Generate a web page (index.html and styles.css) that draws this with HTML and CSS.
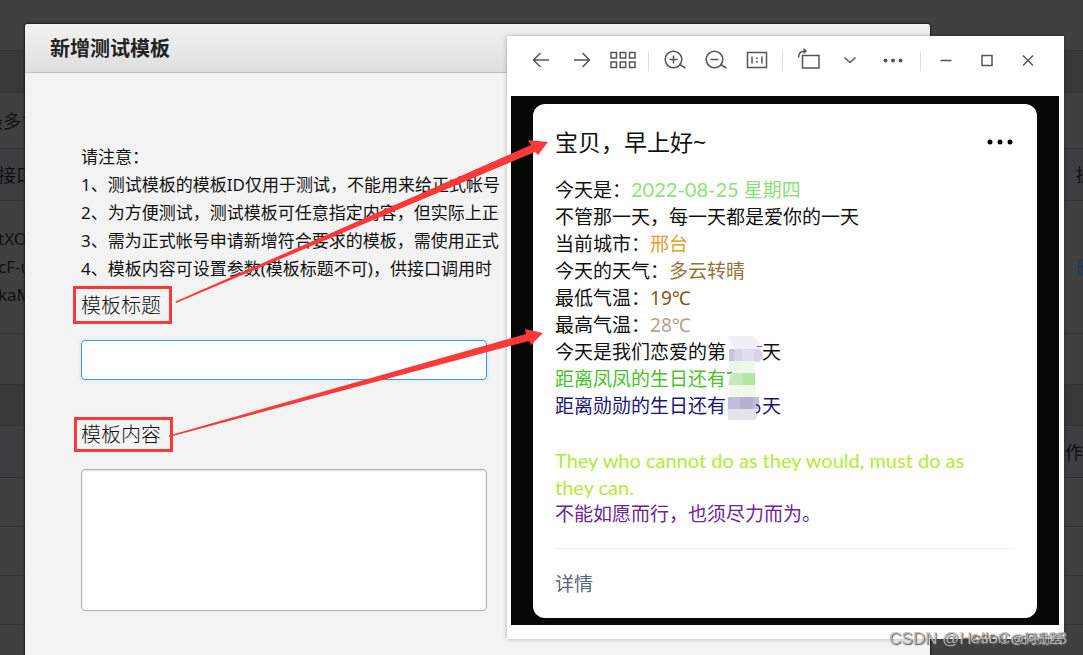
FILE: index.html
```html
<!DOCTYPE html>
<html lang="zh-CN">
<head>
<meta charset="utf-8">
<title>新增测试模板</title>
<link rel="stylesheet" href="styles.css">
</head>
<body>
<main class="page">
  <div class="row row-top"></div>
  <div class="row row-band row-42"></div>
  <div class="row row-56"><span class="edge edge-more">最多1</span></div>
  <div class="row row-head row-52"><span class="edge edge-api">接口</span><span class="edge-right">操作</span></div>
  <div class="row row-133"><span class="edge edge-code">tXO<br>cF-u<br>kaM</span><a class="edge-right remove" href="#">删除</a></div>
  <div class="row row-51"></div>
  <div class="row row-band row-41"></div>
  <div class="row row-head row-52"><span></span><span class="edge-right edge-op">操作</span></div>
  <div class="row row-49"></div>
  <div class="row row-49"></div>
  <div class="row row-49"></div>
</main>

<section class="dialog">
  <h1 class="dialog-title">新增测试模板</h1>
  <form class="dialog-body">
    <div class="notice">
      <p>请注意：</p>
      <p>1、测试模板的模板ID仅用于测试，不能用来给正式帐号</p>
      <p>2、为方便测试，测试模板可任意指定内容，但实际上正</p>
      <p>3、需为正式帐号申请新增符合要求的模板，需使用正式</p>
      <p>4、模板内容可设置参数(模板标题不可)，供接口调用时</p>
    </div>
    <label class="field-label" for="tpl-title">模板标题</label>
    <input class="field-input" id="tpl-title" type="text">
    <label class="field-label field-label-content" for="tpl-content">模板内容</label>
    <textarea class="field-area" id="tpl-content"></textarea>
  </form>
</section>

<section class="viewer">
  <header class="toolbar">
    <button class="tool" type="button" aria-label="上一张"><svg width="28" height="28" viewBox="0 0 28 28"><path d="M22 14H6.500M13.500 7l-7 7 7 7"/></svg></button>
    <button class="tool" type="button" aria-label="下一张"><svg width="28" height="28" viewBox="0 0 28 28"><path d="M6 14h15.500M14.500 7l7 7-7 7"/></svg></button>
    <button class="tool" type="button" aria-label="缩略图"><svg width="28" height="28" viewBox="0 0 28 28"><path d="M2 6.500h5.500v5.500H2zM11.200 6.500h5.500v5.500h-5.500zM20.500 6.500H26v5.500h-5.500zM2 16h5.500v5.500H2zM11.200 16h5.500v5.500h-5.500zM20.500 16H26v5.500h-5.500z"/></svg></button>
    <span class="divider"></span>
    <button class="tool" type="button" aria-label="放大"><svg width="28" height="28" viewBox="0 0 28 28"><circle cx="12.500" cy="13.500" r="8.300"/><path d="M8.500 13.500h8M12.500 9.500v8M18.500 18.500l6 3.500"/></svg></button>
    <button class="tool" type="button" aria-label="缩小"><svg width="28" height="28" viewBox="0 0 28 28"><circle cx="12.500" cy="13.500" r="8.300"/><path d="M8.500 13.500h8M18.500 18.500l6 3.500"/></svg></button>
    <button class="tool" type="button" aria-label="原始大小"><svg width="28" height="28" viewBox="0 0 28 28"><path d="M4.500 6.500h19v15h-19zM9 10.500v7M19 10.500v7M14 11.500v1.800M14 15v1.800"/></svg></button>
    <span class="divider"></span>
    <button class="tool" type="button" aria-label="旋转"><svg width="28" height="28" viewBox="0 0 28 28"><path d="M7.500 9.500h16.500v12.500H7.500zM3.500 11.500C3.500 7 6 5 10.500 5M8.500 2.800l2.500 2.200-2.500 2.200"/></svg></button>
    <button class="tool" type="button" aria-label="展开"><svg width="28" height="28" viewBox="0 0 28 28"><path d="M8.500 11.500l5.500 5 5.500-5"/></svg></button>
    <button class="tool tool-more" type="button" aria-label="更多"><svg width="28" height="28" viewBox="0 0 28 28"><g class="solid"><circle cx="6.500" cy="14.500" r="2"/><circle cx="14" cy="14.500" r="2"/><circle cx="21.500" cy="14.500" r="2"/></g></svg></button>
    <span class="divider divider-last"></span>
    <button class="tool" type="button" aria-label="最小化"><svg width="28" height="28" viewBox="0 0 28 28"><path d="M8.500 14.500h11"/></svg></button>
    <button class="tool" type="button" aria-label="最大化"><svg width="28" height="28" viewBox="0 0 28 28"><path d="M9 9.500h10v10H9z"/></svg></button>
    <button class="tool" type="button" aria-label="关闭"><svg width="28" height="28" viewBox="0 0 28 28"><path d="M9 9.500l10 10M19 9.500l-10 10"/></svg></button>
  </header>
  <div class="photo">
    <article class="card">
      <div class="card-head">
        <h2 class="card-title">宝贝，早上好~</h2>
        <button class="card-menu" type="button" aria-label="菜单"><svg width="26" height="8" viewBox="0 0 26 8"><circle cx="3" cy="4" r="2.500"/><circle cx="13" cy="4" r="2.500"/><circle cx="23" cy="4" r="2.500"/></svg></button>
      </div>
      <div class="message">
        <p>今天是：<span class="c-date"><span class="latin">2022-08-25</span> 星期四</span></p>
        <p>不管那一天，每一天都是爱你的一天</p>
        <p>当前城市：<span class="c-city">邢台</span></p>
        <p>今天的天气：<span class="c-weather">多云转晴</span></p>
        <p>最低气温：<span class="c-low">19℃</span></p>
        <p>最高气温：<span class="c-high">28℃</span></p>
        <div class="counts">
          <p>今天是我们恋爱的第<span class="hidden-count"></span>天</p>
          <p class="c-feng">距离凤凤的生日还有</p>
          <p class="c-xun">距离勋勋的生日还有<span class="hidden-count"></span>天</p>
          <svg class="mosaic" width="36" height="84" viewBox="0 0 36 84">
            <path fill="#f0eef6" d="M0 0h26l7 8v5H8z"/>
            <path fill="#d9d2e9" d="M2 13h30l4 5v4l-4 4H2z"/>
            <path fill="#c9c3d8" d="M2 13h5v12H2z"/>
            <path fill="#e2dcf0" d="M15 13h12v12H15z"/>
            <path fill="#7457c4" d="M30 10h5v1h-5z"/>
            <path fill="#eef7ec" d="M2 25h26v12H2z"/>
            <path fill="#4cc32b" d="M0 36h5v2H0z"/>
            <path fill="#c5e9bb" d="M4 37h12v12H1z"/>
            <path fill="#b5e5a5" d="M16 37h12v12H16z"/>
            <path fill="#f0f8ed" d="M2 49h26v12H2z"/>
            <path fill="#c1bed8" d="M1 61h31v12H1z"/>
            <path fill="#b5b0d0" d="M13 61h13v12H13z"/>
            <path fill="#e4e3ec" d="M1 73h29v8l-2 3H1z"/>
            <path fill="none" stroke="#29208b" stroke-width="1.500" d="M29 69c5-1 5 7 0 8"/>
          </svg>
        </div>
        <p class="blank"></p>
        <p class="c-en">They who cannot do as they would, must do as they can.</p>
        <p class="c-cn">不能如愿而行，也须尽力而为。</p>
      </div>
      <a class="detail" href="#">详情</a>
    </article>
  </div>
</section>

<svg class="arrows" width="1083" height="655" viewBox="0 0 1083 655" aria-hidden="true">
  <path class="frame" d="M74.500 287.500h96v35h-96zM75.500 418.500h96v32h-96z"/>
  <path class="arrow" d="M175.500 301.500L531 145l-3-5 20 2-10 13-3-3L176 303zM169 435.500L526 334l-1-5 18 4-12 12-2-4L169 437z"/>
</svg>
<div class="watermark">CSDN @HelloCode123</div>
<div class="watermark watermark-small">CSDN @阿勋啥</div>
</body>
</html>
```
FILE: styles.css
```css
* {
  box-sizing: border-box;
}

body {
  position: relative;
  margin: 0;
  min-height: 100vh;
  overflow: hidden;
  background: #404040;
  font-family: "Noto Sans", "Noto Sans CJK SC", sans-serif;
}

h1, h2, p {
  margin: 0;
  font-weight: 400;
}

button {
  padding: 0;
  border: 0;
  background: none;
}

.page {
  height: 100vh;
  overflow: hidden;
  color: #101010;
  font-size: 18px;
  line-height: 28px;
}

.row {
  display: flex;
  align-items: center;
  justify-content: space-between;
  border-bottom: 1px solid #333333;
}

.row-top { height: 51px; }
.row-band { background: #383838; }
.row-head { background: #3e3e41; }
.row-41 { height: 41px; }
.row-42 { height: 42px; }
.row-49 { height: 49px; }
.row-51 { height: 51px; }
.row-52 { height: 52px; }
.row-56 { height: 56px; }
.row-133 { height: 133px; }

.edge { white-space: nowrap; }
.edge-more { margin-left: -15px; }
.edge-api { margin-left: -2px; }
.edge-code {
  margin-left: -2px;
  font-size: 17px;
}
.edge-right {
  width: 7px;
  overflow: hidden;
  white-space: nowrap;
}
.edge-op {
  width: 25px;
  direction: rtl;
}
.remove {
  color: #1b3a55;
  text-decoration: none;
}

.dialog {
  position: absolute;
  top: 24px;
  right: 153px;
  bottom: 0;
  left: 25px;
  overflow: hidden;
  border-radius: 3px 3px 0 0;
  background: #f3f3f3;
  box-shadow: 0 0 2px 1px #1c1c1c;
}

.dialog-title {
  padding: 2px 25px 0;
  border-bottom: 1px solid #c2c2c2;
  background: linear-gradient(#f2f2f2, #dedede);
  color: #222222;
  font-size: 20px;
  font-weight: 700;
  line-height: 46px;
}

.dialog-body {
  display: flex;
  flex-direction: column;
  align-items: flex-start;
  padding: 70px 56px;
  color: #111111;
}

.notice {
  font-size: 17px;
  font-weight: 300;
  line-height: 28px;
  white-space: nowrap;
}

.field-label {
  margin-top: 8px;
  font-size: 20px;
  font-weight: 300;
  line-height: 30px;
}

.field-label-content {
  margin-top: 40px;
}

.field-input,
.field-area {
  width: 406px;
  padding: 8px;
  border: 1px solid #b0b0b0;
  border-radius: 4px;
  background: #ffffff;
  font-size: 17px;
  resize: none;
  outline: none;
}

.field-input {
  height: 40px;
  margin-top: 19px;
  border-color: #4499dd;
  box-shadow: 0 0 4px #cfe3f4;
}

.field-area {
  height: 142px;
  margin-top: 19px;
  box-shadow: inset 0 1px 2px #dddddd;
}

.viewer {
  position: absolute;
  top: 36px;
  right: 19px;
  left: 507px;
  padding: 0 5px 14px 4px;
  background: #ffffff;
  box-shadow: 0 0 4px rgba(0, 0, 0, 0.3);
}

.toolbar {
  display: flex;
  align-items: flex-start;
  height: 60px;
  padding: 4px 0 0 9px;
}

.tool {
  display: flex;
  align-items: center;
  justify-content: center;
  width: 41px;
  height: 40px;
}

.tool-more { width: 46px; }

.tool svg {
  fill: none;
  stroke: #555555;
  stroke-width: 1.5;
}

.tool .solid {
  fill: #555555;
  stroke: none;
}

.divider {
  width: 1px;
  height: 20px;
  margin: 11px 5px 0;
  background: #dddddd;
}

.divider-last { margin: 11px 4px 0; }

.photo {
  padding: 8px 22px 7px;
  background: #050805;
}

.card {
  padding: 23px 22px 20px;
  border-radius: 12px;
  background: #ffffff;
  color: #111111;
}

.card-head {
  display: flex;
  align-items: center;
  justify-content: space-between;
}

.card-title {
  font-size: 23px;
  line-height: 30px;
}

.card-menu {
  display: flex;
  margin-right: 2px;
}

.message {
  padding: 20px 0 20px;
  border-bottom: 1px solid #eeeeee;
  font-size: 19px;
  line-height: 27px;
}

.blank { height: 27px; }

.counts { position: relative; }

.hidden-count {
  display: inline-block;
  width: 36px;
}

.mosaic {
  position: absolute;
  top: -3px;
  left: 172px;
}

.latin {
  font-family: Lato, sans-serif;
  font-size: 20px;
  line-height: 20px;
}

.c-date { color: #8fe07a; }
.c-city { color: #e0a030; }
.c-weather { color: #94713a; }
.c-low { color: #8a5518; }
.c-high { color: #b5a38e; }
.c-feng { color: #4cbf2e; }
.c-xun { color: #1a1478; }
.c-en {
  padding-right: 36px;
  color: #b2ea3a;
  font-family: Lato, sans-serif;
  font-size: 20px;
}
.c-cn { color: #6b2590; }

.detail {
  display: block;
  padding-top: 21px;
  color: #56647c;
  font-size: 19px;
  line-height: 28px;
  text-decoration: none;
}

.arrows {
  position: absolute;
  top: 0;
  left: 0;
  pointer-events: none;
}

.frame {
  fill: none;
  stroke: #fb3939;
  stroke-width: 3;
}

.arrow { fill: #fb3939; }

.watermark {
  position: absolute;
  right: 16px;
  bottom: 4px;
  color: rgba(190, 190, 190, 0.9);
  font-family: "Liberation Sans", "Noto Sans CJK SC", sans-serif;
  font-size: 17px;
  line-height: 24px;
  text-shadow: 1px 1px 1px #555555;
}

.watermark-small {
  right: 20px;
  font-size: 13px;
}
```
